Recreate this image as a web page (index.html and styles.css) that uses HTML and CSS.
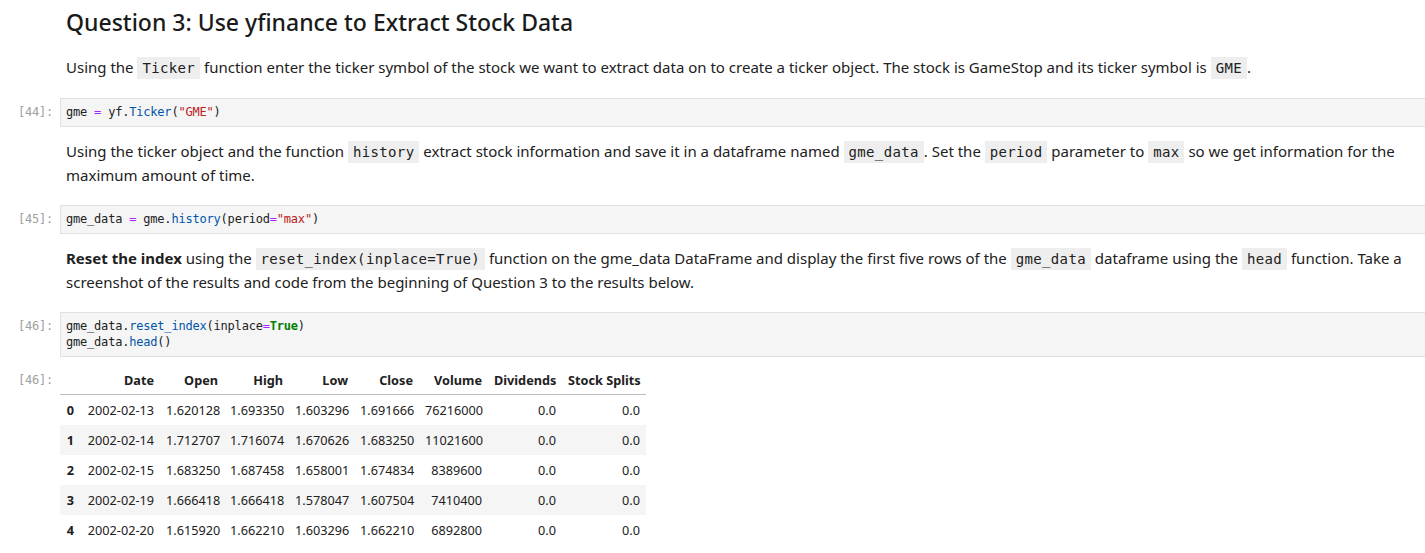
FILE: index.html
```html
<!DOCTYPE html>
<html lang="en">
<head>
<meta charset="utf-8">
<title>Question 3</title>
<link rel="stylesheet" href="styles.css">
</head>
<body>
<div class="notebook">
  <div class="cell md first">
    <div class="prompt"></div>
    <div class="md-body">
      <h2>Question 3: Use yfinance to Extract Stock Data</h2>
      <p>Using the <code>Ticker</code> function enter the ticker symbol of the stock we want to extract data on to create a ticker object. The stock is GameStop and its ticker symbol is <code>GME</code>.</p>
    </div>
  </div>

  <div class="cell code">
    <div class="prompt">[44]:</div>
    <div class="editor"><span class="v">gme</span> <span class="op">=</span> yf.<span class="pr">Ticker</span>(<span class="st">"GME"</span>)</div>
  </div>

  <div class="cell md">
    <div class="prompt"></div>
    <div class="md-body">
      <p>Using the ticker object and the function <code>history</code> extract stock information and save it in a dataframe named <code>gme_data</code>. Set the <code>period</code> parameter to <code>max</code> so we get information for the<br>maximum amount of time.</p>
    </div>
  </div>

  <div class="cell code">
    <div class="prompt">[45]:</div>
    <div class="editor">gme_data <span class="op">=</span> gme.<span class="pr">history</span>(period<span class="op">=</span><span class="st">"max"</span>)</div>
  </div>

  <div class="cell md">
    <div class="prompt"></div>
    <div class="md-body">
      <p><strong>Reset the index</strong> using the <code>reset_index(inplace=True)</code> function on the gme_data DataFrame and display the first five rows of the <code>gme_data</code> dataframe using the <code>head</code> function. Take a<br>screenshot of the results and code from the beginning of Question 3 to the results below.</p>
    </div>
  </div>

  <div class="cell code">
    <div class="prompt">[46]:</div>
    <div class="editor">gme_data.<span class="pr">reset_index</span>(inplace<span class="op">=</span><span class="kw">True</span>)<br>gme_data.<span class="pr">head</span>()</div>
  </div>

  <div class="cell output">
    <div class="prompt">[46]:</div>
    <div class="out-body">
      <table class="df">
        <thead>
          <tr><th></th><th>Date</th><th>Open</th><th>High</th><th>Low</th><th>Close</th><th>Volume</th><th>Dividends</th><th>Stock Splits</th></tr>
        </thead>
        <tbody>
          <tr><th>0</th><td>2002-02-13</td><td>1.620128</td><td>1.693350</td><td>1.603296</td><td>1.691666</td><td>76216000</td><td>0.0</td><td>0.0</td></tr>
          <tr><th>1</th><td>2002-02-14</td><td>1.712707</td><td>1.716074</td><td>1.670626</td><td>1.683250</td><td>11021600</td><td>0.0</td><td>0.0</td></tr>
          <tr><th>2</th><td>2002-02-15</td><td>1.683250</td><td>1.687458</td><td>1.658001</td><td>1.674834</td><td>8389600</td><td>0.0</td><td>0.0</td></tr>
          <tr><th>3</th><td>2002-02-19</td><td>1.666418</td><td>1.666418</td><td>1.578047</td><td>1.607504</td><td>7410400</td><td>0.0</td><td>0.0</td></tr>
          <tr><th>4</th><td>2002-02-20</td><td>1.615920</td><td>1.662210</td><td>1.603296</td><td>1.662210</td><td>6892800</td><td>0.0</td><td>0.0</td></tr>
        </tbody>
      </table>
    </div>
  </div>
</div>
</body>
</html>
```

FILE: styles.css
```css
html, body {
  margin: 0;
  padding: 0;
  background: #ffffff;
  overflow: hidden;
}

body {
  font-family: "Noto Sans", "Open Sans", sans-serif;
  font-size: 15px;
  color: #212121;
}

.notebook {
  display: flex;
  flex-direction: column;
}

.cell {
  display: flex;
  align-items: flex-start;
}

.prompt {
  width: 60px;
  flex-shrink: 0;
  box-sizing: border-box;
  padding-right: 7px;
  text-align: right;
  font-family: "DejaVu Sans Mono", monospace;
  font-size: 12px;
  letter-spacing: -0.2px;
  line-height: 16px;
  color: #a0a0a0;
}

.code .prompt {
  padding-top: 6px;
}

/* markdown */
.md {
  padding-top: 12px;
  padding-bottom: 18px;
}

.md.first {
  padding-top: 0;
  padding-bottom: 19px;
}

.md-body {
  padding-left: 6px;
  flex: 1;
  min-width: 0;
}

.md-body h2 {
  margin: 8px 0 18px;
  font-size: 23px;
  line-height: 29px;
  font-weight: 500;
  color: #1a1a1a;
}

.md-body p {
  margin: 0;
  line-height: 24px;
  white-space: nowrap;
}

.md-body strong {
  font-weight: 700;
}

.md-body code {
  font-family: "DejaVu Sans Mono", monospace;
  font-size: 14px;
  line-height: 1;
  letter-spacing: 0.35px;
  background: #eeeeee;
  padding: 3px 5px;
}

/* code cells */
.editor {
  flex: 1;
  margin-right: -20px;
  background: #f5f5f5;
  border: 1px solid #e0e0e0;
  padding: 5px 5px 6px;
  font-family: "DejaVu Sans Mono", monospace;
  font-size: 12px;
  letter-spacing: -0.2px;
  line-height: 16px;
  color: #212121;
  white-space: pre;
}

.editor .op { color: #aa22ff; }
.editor .st { color: #ba2121; }
.editor .pr { color: #0055aa; }
.editor .kw { color: #008000; font-weight: 700; }

/* output */
.output {
  margin-top: 8px;
}

.output .prompt {
  padding-top: 7px;
}

.df {
  border-collapse: collapse;
  table-layout: fixed;
  width: 586px;
  font-size: 12.7px;
  color: #212121;
}

.df th,
.df td {
  padding: 0 6px;
  text-align: right;
  vertical-align: middle;
  white-space: nowrap;
  height: 30px;
}

.df thead th {
  height: 29px;
  font-weight: 700;
  border-bottom: 1px solid #bdbdbd;
}

.df tbody th {
  font-weight: 700;
}

.df tbody tr:nth-child(even) {
  background: #f5f5f5;
}

.df th:nth-child(1) { width: 8px; }
.df th:nth-child(2) { width: 68px; }
.df th:nth-child(3) { width: 52px; }
.df th:nth-child(4) { width: 53px; }
.df th:nth-child(5) { width: 53px; }
.df th:nth-child(6) { width: 53px; }
.df th:nth-child(7) { width: 57px; }
.df th:nth-child(8) { width: 62px; }
.df th:nth-child(9) { width: 72px; }
```
